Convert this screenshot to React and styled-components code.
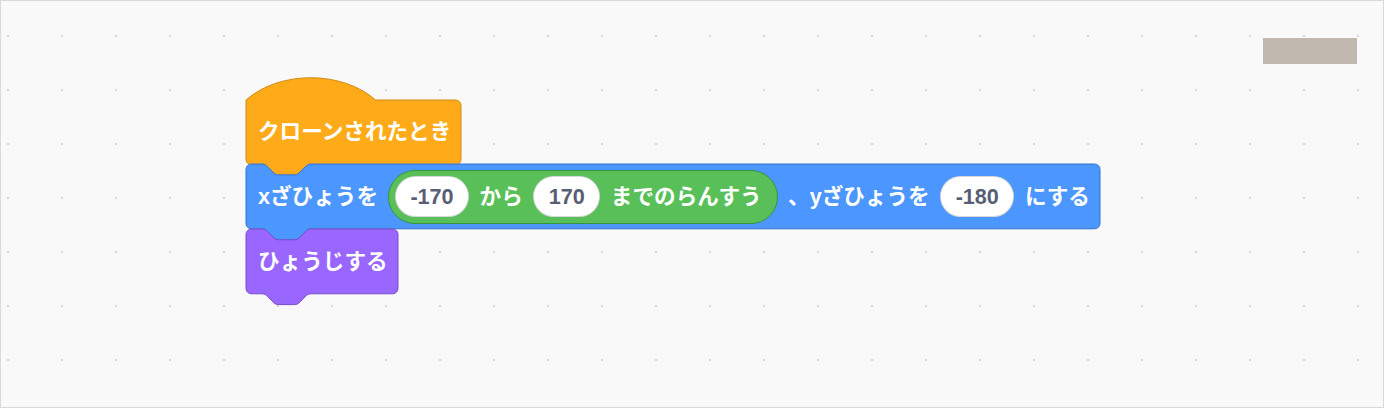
import React, { useLayoutEffect, useRef, useState } from "react";
import styled, { createGlobalStyle } from "styled-components";

const S = 1.35;
const u = (v) => +(v * S).toFixed(2);
const BLOCK_H = u(48);

const GlobalStyle = createGlobalStyle`
  html, body {
    margin: 0;
    padding: 0;
    background: #f9f9f9;
  }
  body {
    font-family: "Liberation Sans", "Noto Sans CJK JP", sans-serif;
  }
`;

const colors = {
  control: { fill: "#FFAB19", stroke: "#CF8B17" },
  motion: { fill: "#4C97FF", stroke: "#3373CC" },
  looks: { fill: "#9966FF", stroke: "#774DCB" },
  operators: { fill: "#59C059", stroke: "#389438" },
};

// scratch-blocks style outline, drawn in workspace units then scaled
function stackPath(w, h, hat) {
  const r = u(4);
  const notchDown = `c ${u(2)} 0 ${u(3)} ${u(1)} ${u(4)} ${u(2)} l ${u(4)} ${u(4)} c ${u(1)} ${u(1)} ${u(2)} ${u(2)} ${u(4)} ${u(2)} h ${u(12)} c ${u(2)} 0 ${u(3)} ${-u(1)} ${u(4)} ${-u(2)} l ${u(4)} ${-u(4)} c ${u(1)} ${-u(1)} ${u(2)} ${-u(2)} ${u(4)} ${-u(2)}`;
  const notchBack = `c ${-u(2)} 0 ${-u(3)} ${u(1)} ${-u(4)} ${u(2)} l ${-u(4)} ${u(4)} c ${-u(1)} ${u(1)} ${-u(2)} ${u(2)} ${-u(4)} ${u(2)} h ${-u(12)} c ${-u(2)} 0 ${-u(3)} ${-u(1)} ${-u(4)} ${-u(2)} l ${-u(4)} ${-u(4)} c ${-u(1)} ${-u(1)} ${-u(2)} ${-u(2)} ${-u(4)} ${-u(2)}`;
  const top = hat
    ? `M 0 0 c ${u(25)} ${-u(22)} ${u(71)} ${-u(22)} ${u(96)} 0 H ${w - r} a ${r} ${r} 0 0 1 ${r} ${r}`
    : `M 0 ${r} a ${r} ${r} 0 0 1 ${r} ${-r} H ${u(12)} ${notchDown} H ${w - r} a ${r} ${r} 0 0 1 ${r} ${r}`;
  return `${top} V ${h - r} a ${r} ${r} 0 0 1 ${-r} ${r} H ${u(48)} ${notchBack} H ${r} a ${r} ${r} 0 0 1 ${-r} ${-r} Z`;
}

const Workspace = styled.div`
  position: relative;
  width: 100vw;
  height: 408px;
  overflow: hidden;
  background-color: #f9f9f9;
  background-image: radial-gradient(circle, #d6d6d6 0.9px, transparent 1.4px);
  background-size: 54px 54px;
  background-position: 35px 9px;
  box-shadow: inset 0 0 0 1px #dadada;
`;

const Scrollbar = styled.div`
  position: absolute;
  top: 38px;
  left: 1263px;
  width: 94px;
  height: 26px;
  background: #c1b9b0;
`;

const Script = styled.div`
  position: absolute;
  left: 246px;
  top: 99.5px;
  display: flex;
  flex-direction: column;
  align-items: flex-start;
`;

const BlockBody = styled.div`
  position: relative;
  z-index: 0;
  display: flex;
  align-items: center;
  gap: 10.5px;
  height: ${BLOCK_H}px;
  padding: 0 10px 0 12px;
  box-sizing: border-box;
  color: #fff;
  font-size: 21.6px;
  font-weight: 700;
  white-space: nowrap;

  svg {
    position: absolute;
    left: 0;
    top: 0;
    z-index: -1;
    overflow: visible;
  }
`;

const Label = styled.span`
  line-height: 1;
`;

const Reporter = styled.div`
  display: flex;
  align-items: center;
  gap: 10.5px;
  height: ${u(40)}px;
  padding: 0 15px 0 5.4px;
  box-sizing: border-box;
  border-radius: 999px;
  background: ${(p) => colors[p.$cat].fill};
  border: 1px solid ${(p) => colors[p.$cat].stroke};
`;

const NumberInput = styled.div`
  display: flex;
  align-items: center;
  justify-content: center;
  height: ${u(30)}px;
  min-width: ${u(40)}px;
  padding: 0 14.5px;
  box-sizing: border-box;
  border-radius: 999px;
  background: #fff;
  border: 1px solid rgba(0, 0, 0, 0.15);
  color: #575e75;
  font-size: 21.6px;
  font-weight: 700;
  line-height: 1;
`;

function Block({ cat, hat, children }) {
  const ref = useRef(null);
  const [w, setW] = useState(0);

  useLayoutEffect(() => {
    const el = ref.current;
    if (!el) return;
    const measure = () => setW(el.offsetWidth);
    measure();
    const ro = new ResizeObserver(measure);
    ro.observe(el);
    return () => ro.disconnect();
  }, []);

  const c = colors[cat];
  return (
    <BlockBody ref={ref}>
      {w > 0 && (
        <svg width={w} height={BLOCK_H}>
          <path d={stackPath(w, BLOCK_H, hat)} fill={c.fill} stroke={c.stroke} strokeWidth="1" />
        </svg>
      )}
      {children}
    </BlockBody>
  );
}

export default function App() {
  return (
    <>
      <GlobalStyle />
      <Workspace>
        <Scrollbar />
        <Script>
          <Block cat="control" hat>
            <Label>クローンされたとき</Label>
          </Block>
          <Block cat="motion">
            <Label>xざひょうを</Label>
            <Reporter $cat="operators">
              <NumberInput>-170</NumberInput>
              <Label>から</Label>
              <NumberInput>170</NumberInput>
              <Label>までのらんすう</Label>
            </Reporter>
            <Label>、yざひょうを</Label>
            <NumberInput>-180</NumberInput>
            <Label>にする</Label>
          </Block>
          <Block cat="looks">
            <Label>ひょうじする</Label>
          </Block>
        </Script>
      </Workspace>
    </>
  );
}
